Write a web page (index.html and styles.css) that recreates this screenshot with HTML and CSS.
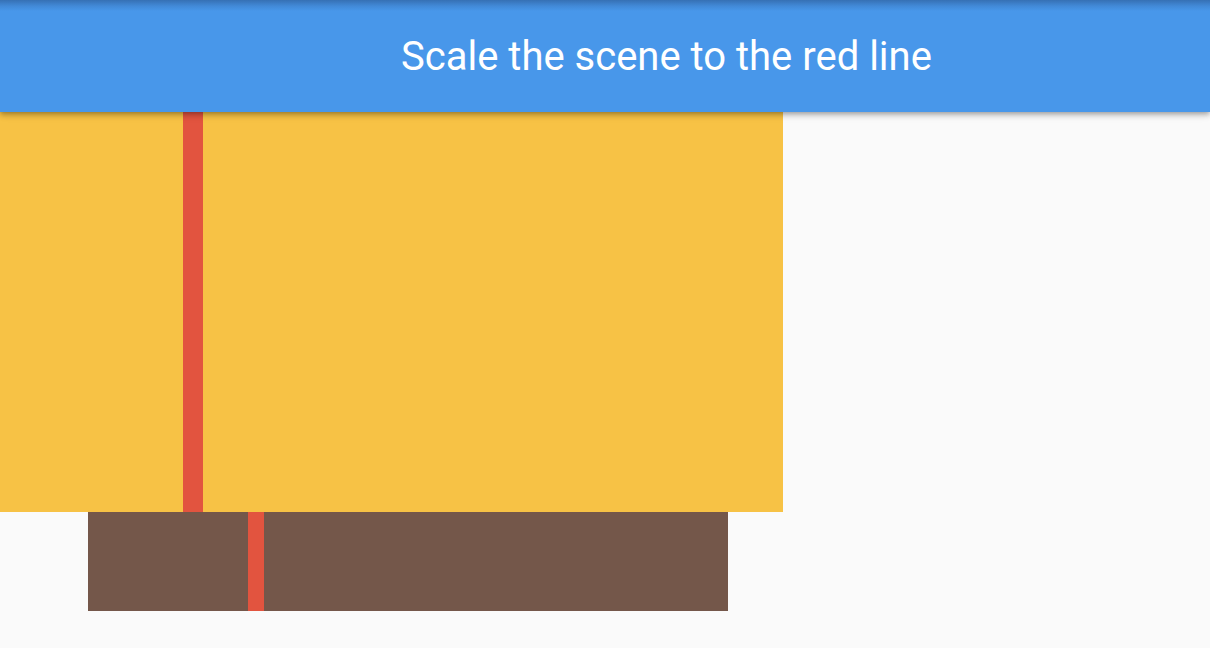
FILE: index.html
```html
<!DOCTYPE html>
<html>
<head>
<meta charset="utf-8">
<link rel="stylesheet" href="styles.css">
</head>
<body>
<header class="appbar">
  <h1 class="title">Scale the scene to the red line</h1>
</header>
<main class="scene">
  <div class="block yellow"><div class="line line-wide"></div></div>
  <div class="block brown"><div class="line line-narrow"></div></div>
</main>
</body>
</html>
```
FILE: styles.css
```css
html, body {
  margin: 0;
  padding: 0;
}
body {
  background: #fafafa;
  width: 1210px;
  height: 648px;
  overflow: hidden;
  font-family: Roboto, "Noto Sans", sans-serif;
}
.appbar {
  position: relative;
  z-index: 2;
  height: 112px;
  background-color: #4897ea;
  background-image: linear-gradient(to bottom, rgba(20, 40, 80, 0.35) 0px, rgba(20, 40, 80, 0.12) 6px, rgba(20, 40, 80, 0) 11px);
  box-shadow: 0 2px 4px -1px rgba(0,0,0,0.2), 0 4px 5px 0 rgba(0,0,0,0.14), 0 1px 10px 0 rgba(0,0,0,0.12);
  display: flex;
  align-items: center;
  padding-left: 401px;
  box-sizing: border-box;
}
.title {
  margin: 0;
  margin-top: 1px;
  font-family: Roboto, sans-serif;
  font-weight: 400;
  font-size: 40px;
  line-height: 47px;
  color: #ffffff;
  white-space: nowrap;
}
.scene {
  display: flex;
  flex-direction: column;
}
.block {
  display: flex;
}
.yellow {
  width: 783px;
  height: 400px;
  background: #f7c245;
  padding-left: 183px;
  box-sizing: border-box;
}
.brown {
  margin-left: 88px;
  width: 640px;
  height: 99px;
  background: #74574a;
  padding-left: 160px;
  box-sizing: border-box;
}
.line {
  background: #e2543f;
  height: 100%;
}
.line-wide { width: 20px; }
.line-narrow { width: 16px; }
```
